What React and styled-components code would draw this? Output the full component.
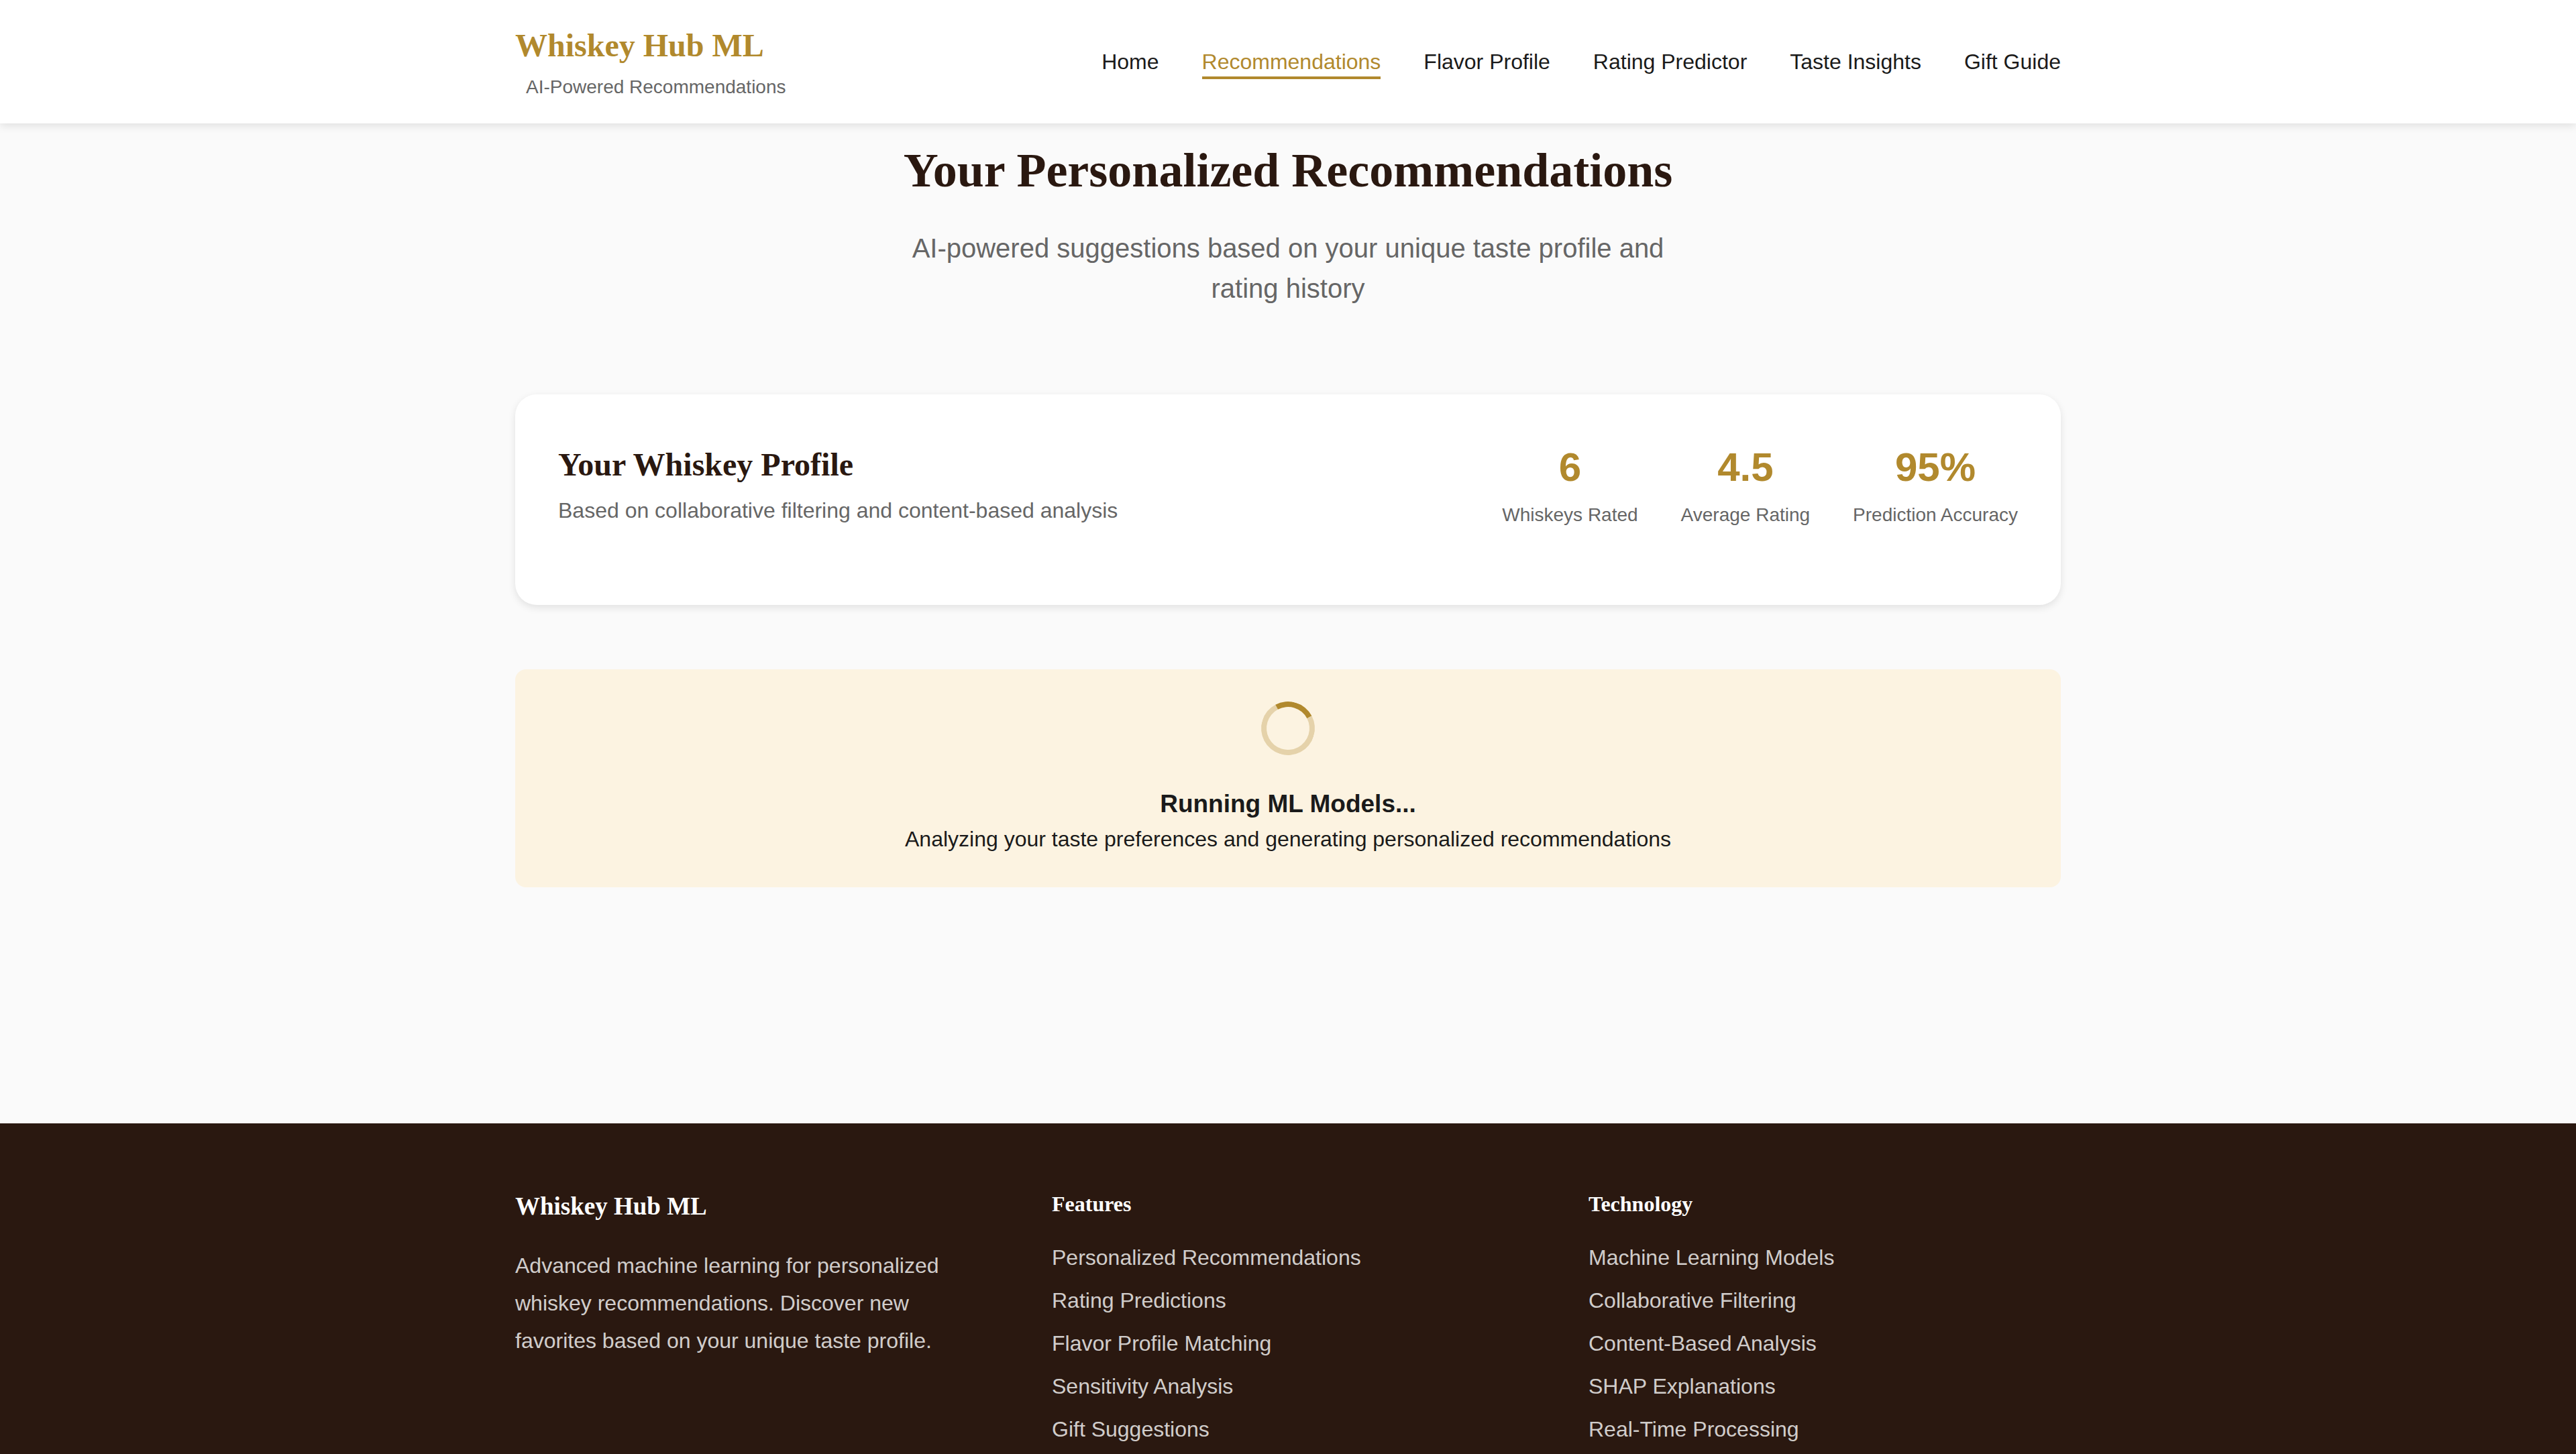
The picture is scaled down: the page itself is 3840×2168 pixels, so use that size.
import React from "react";
import styled, { createGlobalStyle, ThemeProvider } from "styled-components";

const theme = {
  gold: "#b1892d",
  brown: "#2a1810",
  ink: "#1a1a1a",
  muted: "#666666",
  page: "#fafafa",
  cream: "#fcf3e1",
  sans: '"Liberation Sans", Arial, Helvetica, sans-serif',
  serif: '"Liberation Serif", "Times New Roman", serif',
};

const GlobalStyle = createGlobalStyle`
  * { box-sizing: border-box; margin: 0; padding: 0; }
  body {
    background: ${theme.page};
    color: ${theme.ink};
    font-family: ${theme.sans};
    font-size: 32px;
    line-height: 48px;
  }
`;

const Page = styled.div`
  min-height: 100vh;
  display: flex;
  flex-direction: column;
`;

const Container = styled.div`
  width: 100%;
  max-width: 2400px;
  margin: 0 auto;
  padding: 0 48px;
`;

const Header = styled.header`
  background: #ffffff;
  padding: 32px 0;
  box-shadow: 0 4px 12px rgba(0, 0, 0, 0.1);
`;

const HeaderRow = styled(Container)`
  display: flex;
  align-items: center;
  justify-content: space-between;
`;

const Logo = styled.div`
  font-family: ${(p) => p.theme.serif};
  font-size: 48px;
  font-weight: 700;
  line-height: 72px;
  color: ${(p) => p.theme.gold};
`;

const Tagline = styled.div`
  padding-left: 16px;
`;

const SmallText = styled.span`
  font-size: 28px;
  line-height: 28px;
  color: ${(p) => p.theme.muted};
`;

const NavList = styled.ul`
  display: flex;
  gap: 64px;
  list-style: none;
`;

const NavLink = styled.a`
  display: block;
  padding: 8px 0 4px;
  line-height: 36px;
  text-decoration: none;
  color: ${(p) => (p.$active ? p.theme.gold : p.theme.ink)};
  border-bottom: 4px solid ${(p) => (p.$active ? p.theme.gold : "transparent")};
`;

const Main = styled.main`
  padding: 16px 0 352px;
`;

const Hero = styled.section`
  margin-bottom: 128px;
  text-align: center;
`;

const HeroTitle = styled.h1`
  margin-bottom: 32px;
  font-family: ${(p) => p.theme.serif};
  font-size: 72px;
  line-height: 108px;
  color: ${(p) => p.theme.brown};
`;

const HeroText = styled.p`
  max-width: 1200px;
  margin: 0 auto;
  font-size: 40px;
  line-height: 60px;
  color: ${(p) => p.theme.muted};
`;

const ProfileCard = styled.section`
  display: flex;
  align-items: center;
  justify-content: space-between;
  margin-bottom: 96px;
  padding: 64px 64px 112px;
  border-radius: 32px;
  background: #ffffff;
  box-shadow: 0 4px 12px rgba(0, 0, 0, 0.1);
`;

const ProfileTitle = styled.h2`
  margin-bottom: 8px;
  font-family: ${(p) => p.theme.serif};
  font-size: 48px;
  line-height: 72px;
  color: ${(p) => p.theme.brown};
`;

const ProfileText = styled.p`
  color: ${(p) => p.theme.muted};
`;

const Stats = styled.div`
  display: flex;
  gap: 64px;
  text-align: center;
`;

const StatValue = styled.div`
  font-size: 60px;
  font-weight: 700;
  line-height: 90px;
  color: ${(p) => p.theme.gold};
`;

const LoadingPanel = styled.section`
  padding: 48px;
  border-radius: 16px;
  background: ${(p) => p.theme.cream};
  text-align: center;
`;

const Spinner = styled.div`
  width: 80px;
  height: 80px;
  margin: 0 auto 45px;
  border: 8px solid rgba(177, 137, 45, 0.3);
  border-top-color: ${(p) => p.theme.gold};
  border-radius: 50%;
  transform: rotate(17deg);
`;

const LoadingTitle = styled.h3`
  font-size: 37px;
  line-height: 56px;
`;

const Footer = styled.footer`
  flex: 1;
  padding-top: 96px;
  background: ${(p) => p.theme.brown};
  color: #ffffff;
`;

const FooterGrid = styled(Container)`
  display: grid;
  grid-template-columns: repeat(3, 1fr);
  gap: 96px;
`;

const FooterBrand = styled.h3`
  margin-bottom: 32px;
  font-family: ${(p) => p.theme.serif};
  font-size: 37px;
  line-height: 56px;
`;

const FooterText = styled.p`
  line-height: 56px;
  color: rgba(255, 255, 255, 0.8);
`;

const FooterHeading = styled.h4`
  margin-bottom: 32px;
  font-family: ${(p) => p.theme.serif};
  font-size: 32px;
  line-height: 48px;
`;

const FooterList = styled.ul`
  display: grid;
  gap: 16px;
  list-style: none;
  color: rgba(255, 255, 255, 0.8);
`;

const navItems = [
  "Home",
  "Recommendations",
  "Flavor Profile",
  "Rating Predictor",
  "Taste Insights",
  "Gift Guide",
];

const stats = [
  { value: "6", label: "Whiskeys Rated" },
  { value: "4.5", label: "Average Rating" },
  { value: "95%", label: "Prediction Accuracy" },
];

const footerColumns = [
  {
    title: "Features",
    items: [
      "Personalized Recommendations",
      "Rating Predictions",
      "Flavor Profile Matching",
      "Sensitivity Analysis",
      "Gift Suggestions",
    ],
  },
  {
    title: "Technology",
    items: [
      "Machine Learning Models",
      "Collaborative Filtering",
      "Content-Based Analysis",
      "SHAP Explanations",
      "Real-Time Processing",
    ],
  },
];

export default function App() {
  return (
    <ThemeProvider theme={theme}>
      <GlobalStyle />
      <Page>
        <Header>
          <HeaderRow>
            <div>
              <Logo>Whiskey Hub ML</Logo>
              <Tagline>
                <SmallText>AI-Powered Recommendations</SmallText>
              </Tagline>
            </div>
            <nav>
              <NavList>
                {navItems.map((item) => (
                  <li key={item}>
                    <NavLink href="#" $active={item === "Recommendations"}>
                      {item}
                    </NavLink>
                  </li>
                ))}
              </NavList>
            </nav>
          </HeaderRow>
        </Header>

        <Main>
          <Container>
            <Hero>
              <HeroTitle>Your Personalized Recommendations</HeroTitle>
              <HeroText>
                AI-powered suggestions based on your unique taste profile and rating history
              </HeroText>
            </Hero>

            <ProfileCard>
              <div>
                <ProfileTitle>Your Whiskey Profile</ProfileTitle>
                <ProfileText>
                  Based on collaborative filtering and content-based analysis
                </ProfileText>
              </div>
              <Stats>
                {stats.map((stat) => (
                  <div key={stat.label}>
                    <StatValue>{stat.value}</StatValue>
                    <SmallText>{stat.label}</SmallText>
                  </div>
                ))}
              </Stats>
            </ProfileCard>

            <LoadingPanel role="status">
              <Spinner />
              <LoadingTitle>Running ML Models...</LoadingTitle>
              <p>Analyzing your taste preferences and generating personalized recommendations</p>
            </LoadingPanel>
          </Container>
        </Main>

        <Footer>
          <FooterGrid>
            <div>
              <FooterBrand>Whiskey Hub ML</FooterBrand>
              <FooterText>
                Advanced machine learning for personalized whiskey recommendations. Discover new
                favorites based on your unique taste profile.
              </FooterText>
            </div>
            {footerColumns.map((column) => (
              <div key={column.title}>
                <FooterHeading>{column.title}</FooterHeading>
                <FooterList>
                  {column.items.map((item) => (
                    <li key={item}>{item}</li>
                  ))}
                </FooterList>
              </div>
            ))}
          </FooterGrid>
        </Footer>
      </Page>
    </ThemeProvider>
  );
}
